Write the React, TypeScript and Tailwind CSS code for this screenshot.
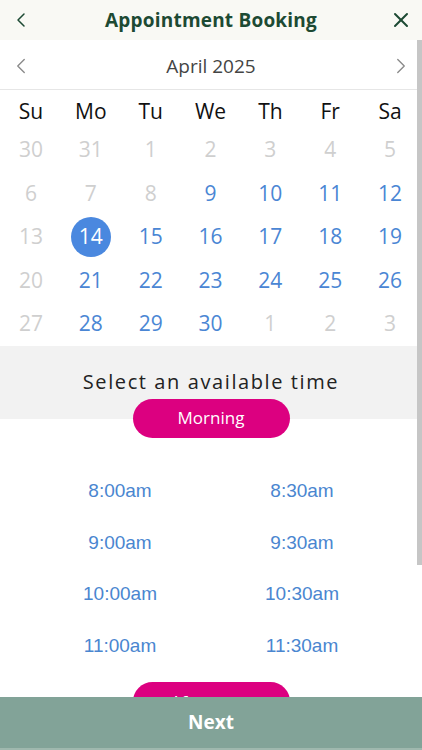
import { ChevronLeft, ChevronRight, X } from "lucide-react";

const WEEKDAYS = ["Su", "Mo", "Tu", "We", "Th", "Fr", "Sa"];

type Day = { n: number; state: "muted" | "open" | "selected" };

const muted = (n: number): Day => ({ n, state: "muted" });
const open = (n: number): Day => ({ n, state: "open" });

const WEEKS: Day[][] = [
  [muted(30), muted(31), muted(1), muted(2), muted(3), muted(4), muted(5)],
  [muted(6), muted(7), muted(8), open(9), open(10), open(11), open(12)],
  [muted(13), { n: 14, state: "selected" }, open(15), open(16), open(17), open(18), open(19)],
  [muted(20), open(21), open(22), open(23), open(24), open(25), open(26)],
  [muted(27), open(28), open(29), open(30), muted(1), muted(2), muted(3)],
];

const SLOTS = ["8:00am", "8:30am", "9:00am", "9:30am", "10:00am", "10:30am", "11:00am", "11:30am"];

export default function App() {
  return (
    <div className="relative flex h-[750px] w-full flex-col overflow-hidden bg-white font-['Open_Sans',sans-serif]">
      {/* Header */}
      <header className="flex h-[40px] shrink-0 items-center justify-between bg-[#f9f9f4] px-[9px]">
        <ChevronLeft className="h-[24px] w-[24px] text-[#1d4a33]" strokeWidth={1.5} />
        <h1 className="text-[19px] font-bold tracking-[0.2px] text-[#1d4a33]">Appointment Booking</h1>
        <X className="h-[24px] w-[24px] text-[#1d4a33]" strokeWidth={2} />
      </header>

      <div className="flex-1 overflow-hidden">
        {/* Month */}
        <div className="flex h-[50px] items-center justify-between border-b border-[#e6e6e6] px-[8px] pt-[3px]">
          <ChevronLeft className="h-[26px] w-[26px] text-[#8a8a8a]" strokeWidth={1.25} />
          <span className="text-[19px] text-[#444]">April 2025</span>
          <ChevronRight className="h-[26px] w-[26px] text-[#8a8a8a]" strokeWidth={1.25} />
        </div>

        {/* Calendar */}
        <div className="w-[420px] pl-px">
          <div className="grid h-[38px] grid-cols-7 items-end pb-[2px]">
            {WEEKDAYS.map((d) => (
              <div key={d} className="text-center text-[21px] leading-[30px] text-[#111]">
                {d}
              </div>
            ))}
          </div>
          {WEEKS.map((week, i) => (
            <div key={i} className="grid h-[43.5px] grid-cols-7 items-center">
              {week.map((day, j) => (
                <div key={j} className="flex justify-center">
                  {day.state === "selected" ? (
                    <span className="flex h-[40px] w-[40px] items-center justify-center rounded-full bg-[#4a88df] text-[21px] text-white">
                      {day.n}
                    </span>
                  ) : (
                    <span
                      className={
                        day.state === "muted"
                          ? "text-[21px] text-[#cfcfcf]"
                          : "text-[21px] text-[#4a86d4]"
                      }
                    >
                      {day.n}
                    </span>
                  )}
                </div>
              ))}
            </div>
          ))}
        </div>

        {/* Time selection */}
        <div className="flex h-[73px] items-start justify-center bg-[#f2f2f2] pt-[22px]">
          <span className="text-[20px] leading-[28px] tracking-[1.6px] text-[#222]">Select an available time</span>
        </div>
        <div className="-mt-[20px] flex justify-center">
          <div className="flex h-[39px] w-[157px] items-center justify-center rounded-full bg-[#dc0080] text-[17px] text-white">
            Morning
          </div>
        </div>

        <div className="mt-[28px] grid grid-cols-2 px-[29px] font-['Liberation_Sans',Arial,sans-serif]">
          {SLOTS.map((s) => (
            <div key={s} className="flex h-[51.7px] items-center justify-center text-[19px] text-[#4a86d0]">
              {s}
            </div>
          ))}
        </div>

        <div className="mt-[10px] flex justify-center">
          <div className="flex h-[39px] w-[157px] items-center justify-center rounded-full bg-[#dc0080] text-[17px] text-white">
            Afternoon
          </div>
        </div>
      </div>

      {/* Overlay scrollbar */}
      <div className="absolute right-0 top-[40px] h-[525px] w-[5px] bg-[#c6c6c6]" />

      {/* Footer */}
      <footer className="flex h-[53px] shrink-0 items-center justify-center border-b-2 border-[#9fb8ae] bg-[#82a398]">
        <span className="text-[19px] font-bold text-white">Next</span>
      </footer>
    </div>
  );
}
